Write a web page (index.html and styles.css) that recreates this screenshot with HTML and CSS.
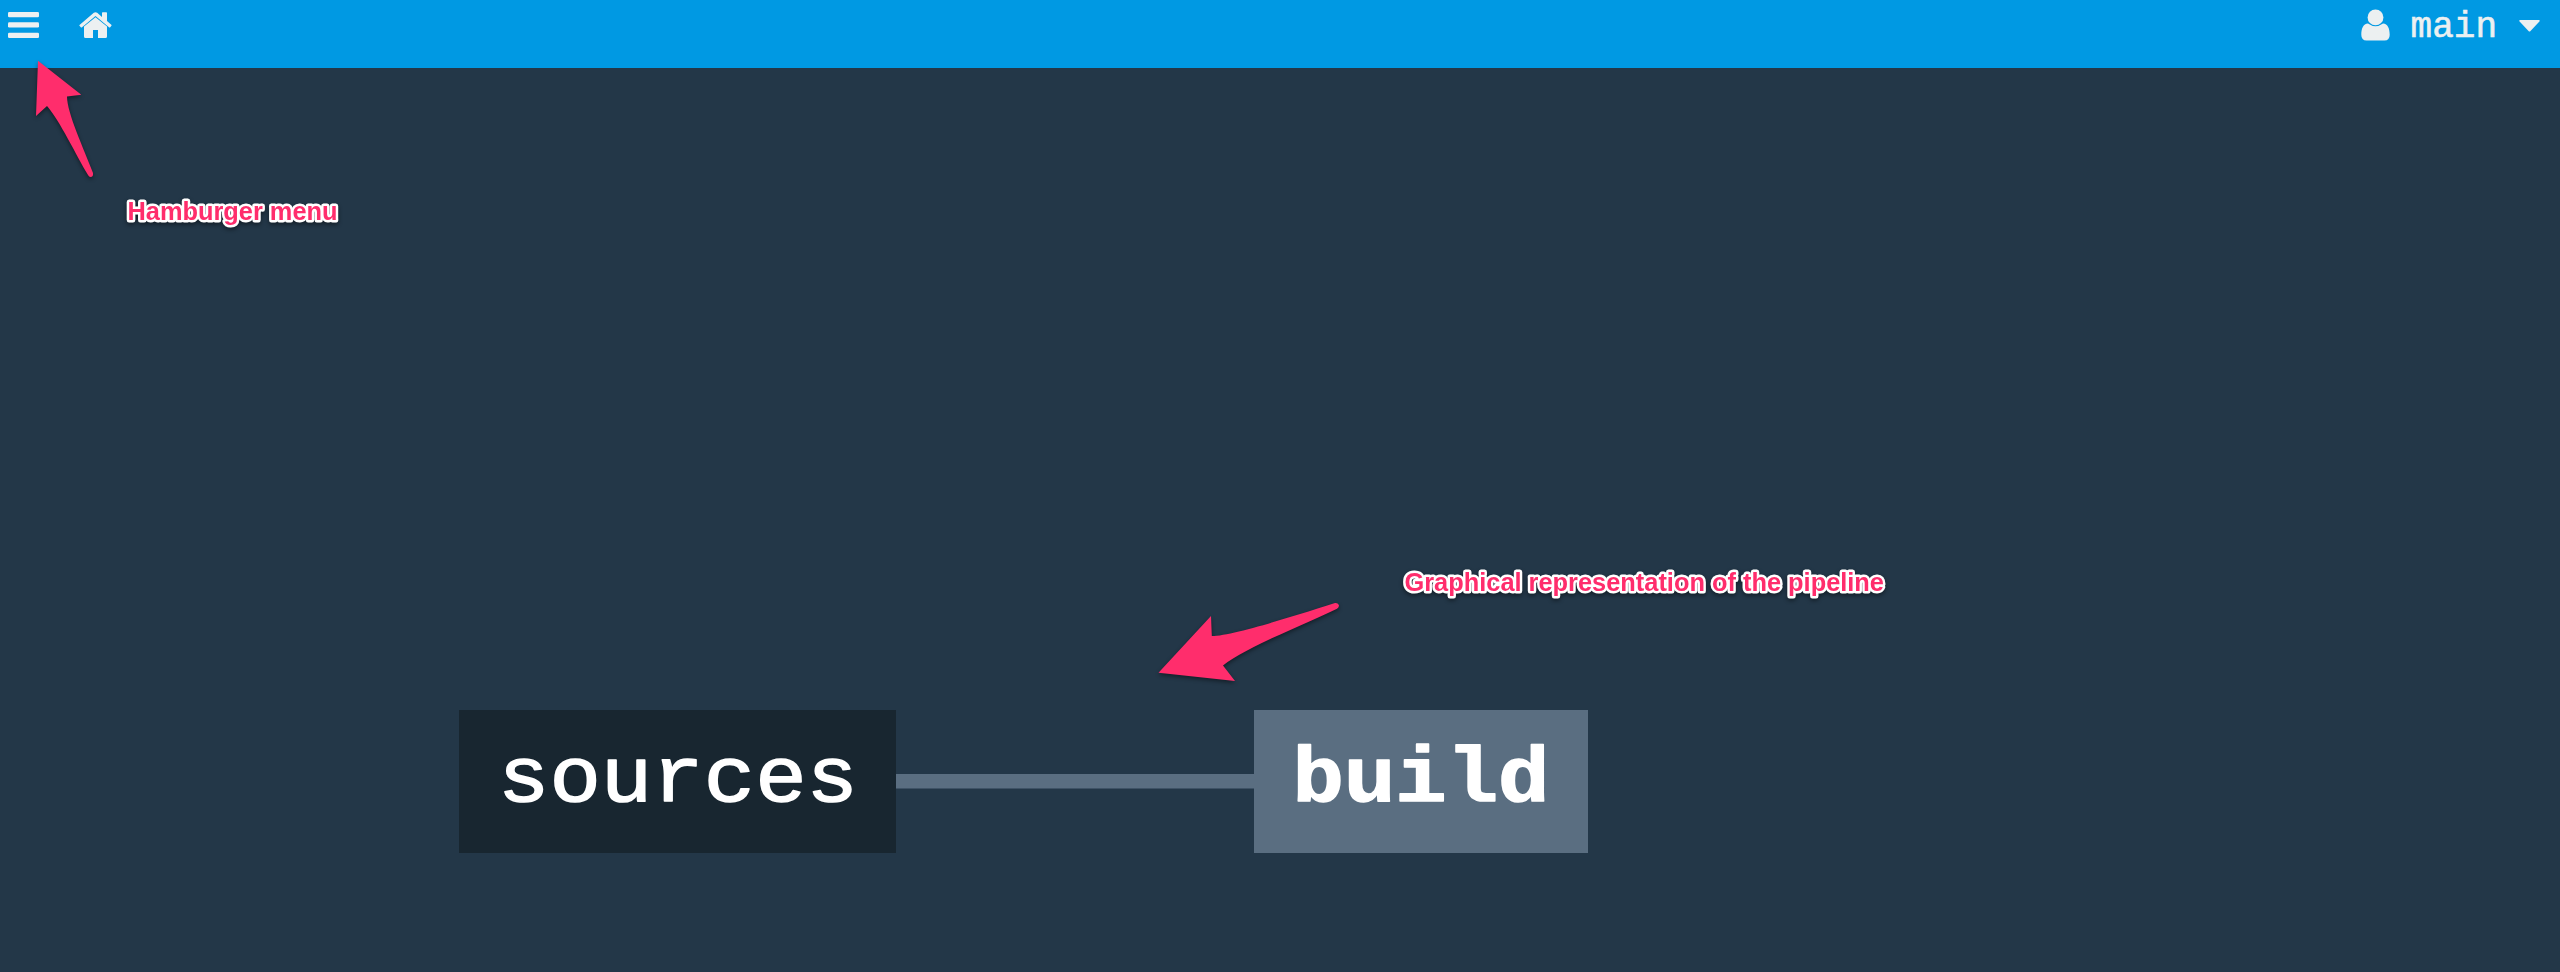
FILE: index.html
```html
<!DOCTYPE html>
<html lang="en">
<head>
<meta charset="utf-8">
<title>Pipeline</title>
<link rel="stylesheet" href="styles.css">
</head>
<body>
<header class="topbar">
  <nav class="nav">
    <svg class="menu" width="31" height="26" viewBox="0 0 31 26"><rect width="31" height="5.3" rx="1.3"/><rect y="10.3" width="31" height="5.3" rx="1.3"/><rect y="20.7" width="31" height="5.3" rx="1.3"/></svg>
    <svg class="home" width="33" height="26" viewBox="0 0 33 26"><path d="M5 14.6 16.5 5.2 28 14.6V24.5Q28 26 26.5 26H19V18H14V26H6.5Q5 26 5 24.5Z"/><path d="M.5 13 14.8 .8Q16.5-.5 18.2 .8L23 4.9V1Q23 .3 23.7 .3H27.3Q28 .3 28 1V9.1L32.3 12.8Q32.8 13.3 32.4 13.8L31.2 15.2Q30.6 15.7 30 15.2L16.5 3.9 3 15.2Q2.3 15.7 1.8 15.2L.5 13.8Q.2 13.4 .5 13Z"/></svg>
  </nav>
  <div class="user">
    <svg width="29" height="32" viewBox="0 0 29 32"><circle cx="14.5" cy="8.4" r="7.9"/><path d="M7 14.5Q14.5 19.9 22 14.5C26.8 14.7 28.7 19.6 28.7 25.8Q28.7 31.6 23.4 31.6H5.6Q.3 31.6 .3 25.8C.3 19.6 2.2 14.7 7 14.5Z"/></svg>
    <span class="team">main</span>
    <svg class="caret" width="21" height="12" viewBox="0 0 21 12"><path d="M1 0H20Q21.2 .5 20.4 1.6L11.5 11Q10.5 12 9.5 11L.6 1.6Q-.2 .5 1 0Z"/></svg>
  </div>
</header>
<main class="canvas">
  <svg class="graph" width="2560" height="904" viewBox="0 68 2560 904">
    <rect class="edge" x="896" y="774" width="360" height="14.5"/>
    <rect class="resource" x="459" y="710" width="437" height="143"/>
    <text class="label" x="498" y="801" textLength="360" lengthAdjust="spacingAndGlyphs">sources</text>
    <rect class="job" x="1254" y="710" width="334" height="143"/>
    <text class="label bold" x="1292.5" y="801" textLength="257" lengthAdjust="spacingAndGlyphs">build</text>
  </svg>
</main>
<svg class="notes" width="2560" height="972" viewBox="0 0 2560 972">
  <path d="M38 60.7 81.3 94.7 67 96.5C67 113 84 149 93 173Q93.5 177 90.5 177 89 177 88 175C76 155 60 121 47 106L36 116Z"/>
  <path d="M1158.5 672.7 1211 616 1211.8 636C1231 636 1291 617 1335 603Q1338.5 602.5 1339 605.5 1339 607.5 1337 608.7C1296 628 1243 649 1223 665.5L1235 681Z"/>
  <text class="note" x="127.5" y="220" textLength="210" lengthAdjust="spacingAndGlyphs">Hamburger menu</text>
  <text class="note" x="1404.5" y="590.5" textLength="479.5" lengthAdjust="spacingAndGlyphs">Graphical representation of the pipeline</text>
</svg>
</body>
</html>
```
FILE: styles.css
```css
body {
  margin: 0;
  height: 972px;
  overflow: hidden;
  background: #233748;
  display: flex;
  flex-direction: column;
}
svg { display: block; }
.topbar {
  height: 68px;
  box-sizing: border-box;
  padding: 0 20px 0 8px;
  background: #0099e3;
  display: flex;
  justify-content: space-between;
  align-items: flex-start;
  fill: #ecf0f1;
  color: #ecf0f1;
}
.nav { display: flex; gap: 40px; padding-top: 12px; }
.user { display: flex; align-items: flex-start; padding-top: 9px; }
.team {
  font: 36px/38px "Courier New", Courier, "Liberation Mono", monospace;
  -webkit-text-stroke: .6px #ecf0f1;
  margin-left: 21px;
  margin-right: 22px;
}
.caret { margin-top: 11px; }
.canvas { height: 904px; }
.edge, .job { fill: #5a6e81; }
.resource { fill: #182630; }
.label {
  font: 78px "Courier New", Courier, "Liberation Mono", monospace;
  fill: #fff;
  stroke: #fff;
  stroke-width: 1.5px;
  stroke-linejoin: round;
}
.bold { font-weight: bold; }
.notes {
  position: absolute;
  top: 0;
  left: 0;
  fill: #ff2d6c;
  filter: drop-shadow(0 2px 2px rgba(0, 0, 0, .45));
}
.note {
  font: bold 26px "Helvetica Neue", Helvetica, "Liberation Sans", Arial, sans-serif;
  stroke: #fff;
  stroke-width: 5px;
  stroke-linejoin: round;
  paint-order: stroke;
}
```
